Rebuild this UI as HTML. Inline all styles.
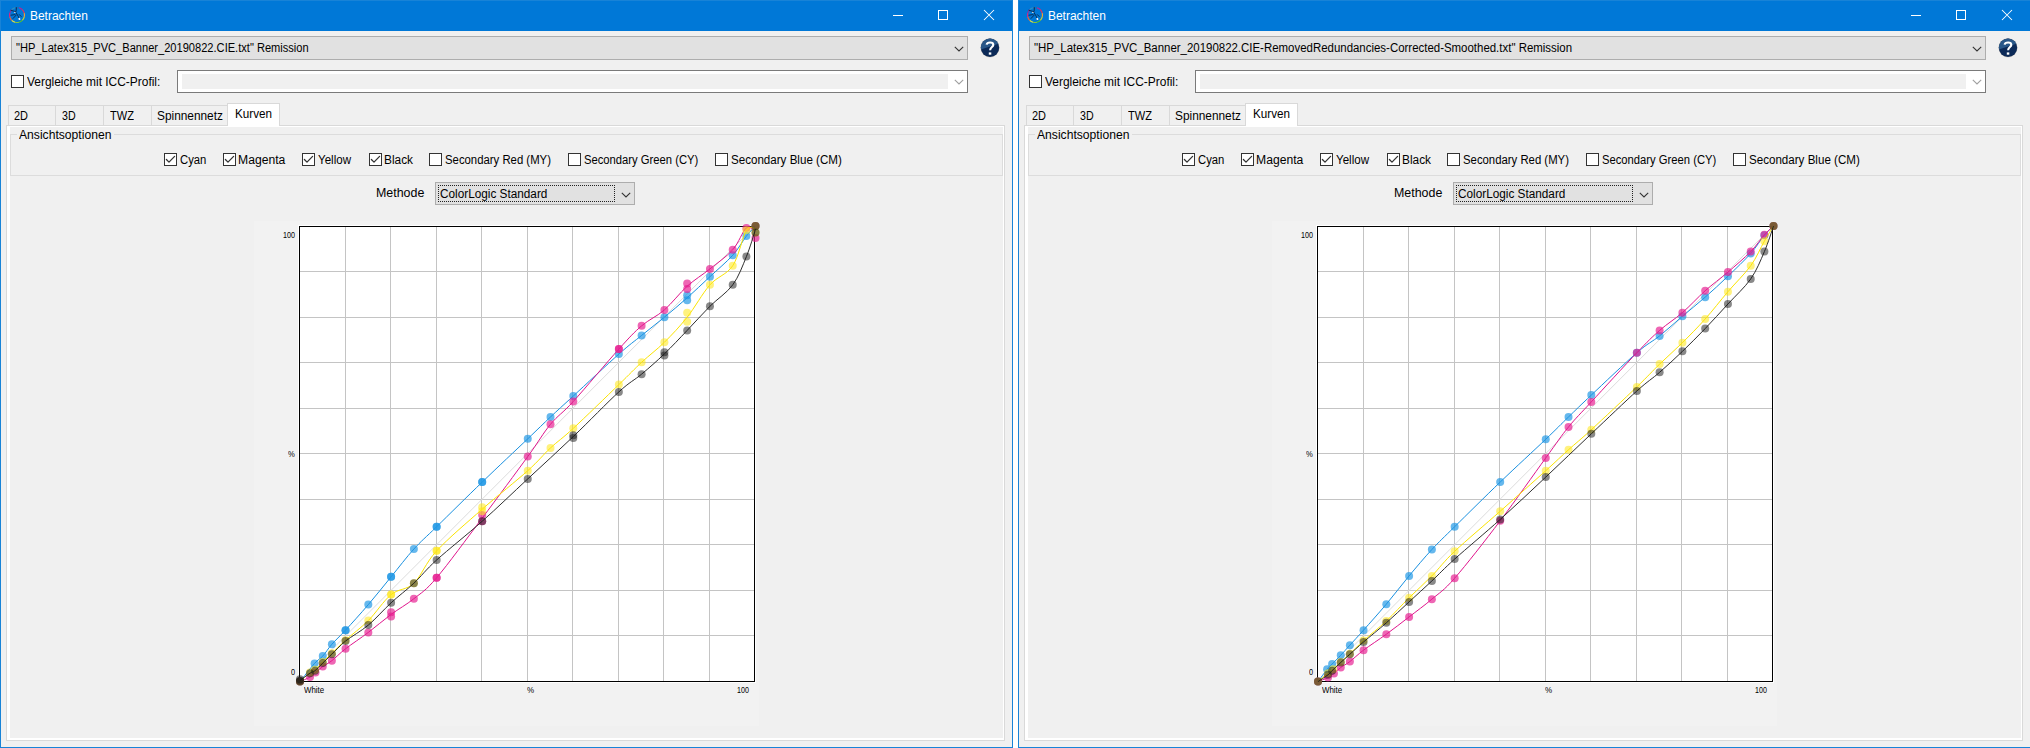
<!DOCTYPE html>
<html><head><meta charset="utf-8"><title>Betrachten</title>
<style>
html,body{margin:0;padding:0}
body{width:2030px;height:748px;overflow:hidden;background:#fff;position:relative;font-family:"Liberation Sans", sans-serif}
.win{position:absolute;top:0;width:1013px;height:748px;background:#f0f0f0;overflow:hidden}
.t{position:absolute;white-space:nowrap;transform-origin:0 0}
.cb{position:absolute;width:11px;height:11px;border:1px solid #333;background:#fff}
</style></head><body>
<div class="win" style="left:0px">
<div style="position:absolute;left:0;top:0;width:1013px;height:31px;background:#0078d7"></div>
<div style="position:absolute;left:0;top:0;width:1013px;height:1px;background:#1883d7"></div>
<div style="position:absolute;left:0;top:0;width:1px;height:748px;background:#1883d7"></div>
<div style="position:absolute;left:1012px;top:0;width:1px;height:748px;background:#1883d7"></div>
<div style="position:absolute;left:0;top:747px;width:1013px;height:1px;background:#1883d7"></div>
<svg width="20" height="20" style="position:absolute;left:7px;top:5px" viewBox="0 0 20 20"><path d="M17.24 8.06A7.5 7.5 0 0 1 17.24 11.94" stroke="#f0a030" stroke-width="1.2" fill="none"/><path d="M17.24 11.94A7.5 7.5 0 0 1 15.30 15.30" stroke="#c8d030" stroke-width="1.2" fill="none"/><path d="M15.30 15.30A7.5 7.5 0 0 1 11.94 17.24" stroke="#50c030" stroke-width="1.2" fill="none"/><path d="M11.94 17.24A7.5 7.5 0 0 1 8.06 17.24" stroke="#80c840" stroke-width="1.2" fill="none"/><path d="M8.06 17.24A7.5 7.5 0 0 1 4.70 15.30" stroke="#e8e040" stroke-width="1.2" fill="none"/><path d="M4.70 15.30A7.5 7.5 0 0 1 2.76 11.94" stroke="#f06030" stroke-width="1.2" fill="none"/><path d="M2.76 11.94A7.5 7.5 0 0 1 2.76 8.06" stroke="#e02080" stroke-width="1.2" fill="none"/><path d="M2.76 8.06A7.5 7.5 0 0 1 4.70 4.70" stroke="#9030a0" stroke-width="1.2" fill="none"/><path d="M4.70 4.70A7.5 7.5 0 0 1 8.06 2.76" stroke="#3090c0" stroke-width="1.2" fill="none"/><path d="M8.06 2.76A7.5 7.5 0 0 1 11.94 2.76" stroke="#2070b0" stroke-width="1.2" fill="none"/><path d="M11.94 2.76A7.5 7.5 0 0 1 15.30 4.70" stroke="#c02090" stroke-width="1.2" fill="none"/><path d="M15.30 4.70A7.5 7.5 0 0 1 17.24 8.06" stroke="#e03060" stroke-width="1.2" fill="none"/><path d="M9.4 2.7L9.1 6.1M4 5.3L8.8 6.7M8.6 7L11.2 11.2L12 13.4M4 10.2L8 9.6M6.1 13.4L9.1 10.2M12.3 9.6L14.2 11.5" stroke="#0c2040" stroke-width="0.85" fill="none" stroke-linecap="round"/><ellipse cx="7.8" cy="7.4" rx="0.9" ry="0.6" fill="#c0d0e0"/><ellipse cx="12.4" cy="13.9" rx="1.1" ry="0.9" fill="#fff" transform="rotate(35 12.4 13.9)"/></svg>
<div class="t" style="left:30.10px;top:9.84px;font-size:12px;line-height:12px;color:#fff;transform:scaleX(0.9964)">Betrachten</div>
<div style="position:absolute;left:893px;top:15px;width:10px;height:1px;background:#fff"></div>
<div style="position:absolute;left:938px;top:10px;width:8px;height:8px;border:1px solid #fff"></div>
<svg width="12" height="12" style="position:absolute;left:983px;top:9px"><path d="M1 1L11 11M11 1L1 11" stroke="#fff" stroke-width="1.05" fill="none"/></svg>
<div style="position:absolute;left:11px;top:36px;width:955px;height:22px;background:#e1e1e1;border:1px solid #adadad"></div>
<div class="t" style="left:15.50px;top:41.84px;font-size:12px;line-height:12px;color:#000;transform:scaleX(0.9241)">"HP_Latex315_PVC_Banner_20190822.CIE.txt" Remission</div>
<svg width="14" height="10" style="position:absolute;left:952.0px;top:44.0px"><path d="M2.8 2.8L7 7L11.2 2.8" stroke="#333" stroke-width="1.1" fill="none"/></svg>
<svg width="24" height="24" style="position:absolute;left:978px;top:36px" viewBox="0 0 24 24">
<defs><clipPath id="hc0"><circle cx="12" cy="11.75" r="9.2"/></clipPath></defs>
<circle cx="12" cy="11.75" r="9.5" fill="#7a6a5a" fill-opacity="0.45"/>
<circle cx="12" cy="11.75" r="9.2" fill="#0c2a58"/>
<path d="M0 14.5L24 6.5V0H0Z" fill="#2f5f90" fill-opacity="0.85" clip-path="url(#hc0)"/>
<path d="M8.6 8.6C9.1 5.9 15.3 5.6 15.3 8.9C15.3 10.9 12.1 11.4 12.1 14.3" stroke="#fff" stroke-width="2.1" fill="none"/>
<rect x="10.8" y="16.4" width="2.5" height="2.3" fill="#fff"/>
</svg>
<div class="cb" style="left:11px;top:75px"></div>
<div class="t" style="left:27.30px;top:75.84px;font-size:12px;line-height:12px;color:#000;transform:scaleX(0.9947)">Vergleiche mit ICC-Profil:</div>
<div style="position:absolute;left:177px;top:70px;width:789px;height:21px;background:#fff;border:1px solid #7a7a7a"></div>
<div style="position:absolute;left:182px;top:74px;width:766px;height:15px;background:#f0f0f0"></div>
<svg width="14" height="10" style="position:absolute;left:952.0px;top:77.0px"><path d="M2.8 2.8L7 7L11.2 2.8" stroke="#a0a0a0" stroke-width="1.1" fill="none"/></svg>
<div style="position:absolute;left:6px;top:125px;width:997px;height:614px;border:1px solid #d9d9d9;background:#fff"></div>
<div style="position:absolute;left:10px;top:127px;width:993px;height:611px;background:#f0f0f0"></div>
<div style="position:absolute;left:8px;top:105px;width:46px;height:19px;border:1px solid #d9d9d9;border-bottom:none;background:#f0f0f0"></div>
<div style="position:absolute;left:55px;top:105px;width:47px;height:19px;border:1px solid #d9d9d9;border-bottom:none;background:#f0f0f0"></div>
<div style="position:absolute;left:103px;top:105px;width:47px;height:19px;border:1px solid #d9d9d9;border-bottom:none;background:#f0f0f0"></div>
<div style="position:absolute;left:151px;top:105px;width:75px;height:19px;border:1px solid #d9d9d9;border-bottom:none;background:#f0f0f0"></div>
<div style="position:absolute;left:227px;top:103px;width:51px;height:22px;border:1px solid #d9d9d9;border-bottom:none;background:#fff"></div>
<div class="t" style="left:14.30px;top:109.84px;font-size:12px;line-height:12px;color:#000;transform:scaleX(0.9133)">2D</div>
<div class="t" style="left:62.30px;top:109.84px;font-size:12px;line-height:12px;color:#000;transform:scaleX(0.8867)">3D</div>
<div class="t" style="left:110.00px;top:109.84px;font-size:12px;line-height:12px;color:#000;transform:scaleX(0.9231)">TWZ</div>
<div class="t" style="left:157.30px;top:109.84px;font-size:12px;line-height:12px;color:#000;transform:scaleX(0.9879)">Spinnennetz</div>
<div class="t" style="left:234.60px;top:107.84px;font-size:12px;line-height:12px;color:#000;transform:scaleX(0.9730)">Kurven</div>
<div style="position:absolute;left:10px;top:134px;width:991px;height:40px;border:1px solid #dcdcdc"></div>
<div style="position:absolute;left:17px;top:130px;width:97px;height:8px;background:#f0f0f0"></div>
<div class="t" style="left:19.30px;top:128.84px;font-size:12px;line-height:12px;color:#000;transform:scaleX(1.0110)">Ansichtsoptionen</div>
<div class="cb" style="left:164px;top:153px"><svg width="13" height="13" style="position:absolute;left:-1px;top:-1px"><path d="M2.4 6.5L5 9.1L10.6 3.4" stroke="#333" stroke-width="1.3" fill="none" stroke-linecap="round" stroke-linejoin="round"/></svg></div>
<div class="t" style="left:180.40px;top:153.84px;font-size:12px;line-height:12px;color:#000;transform:scaleX(0.9393)">Cyan</div>
<div class="cb" style="left:223px;top:153px"><svg width="13" height="13" style="position:absolute;left:-1px;top:-1px"><path d="M2.4 6.5L5 9.1L10.6 3.4" stroke="#333" stroke-width="1.3" fill="none" stroke-linecap="round" stroke-linejoin="round"/></svg></div>
<div class="t" style="left:238.20px;top:153.84px;font-size:12px;line-height:12px;color:#000;transform:scaleX(1.0130)">Magenta</div>
<div class="cb" style="left:302px;top:153px"><svg width="13" height="13" style="position:absolute;left:-1px;top:-1px"><path d="M2.4 6.5L5 9.1L10.6 3.4" stroke="#333" stroke-width="1.3" fill="none" stroke-linecap="round" stroke-linejoin="round"/></svg></div>
<div class="t" style="left:318.30px;top:153.84px;font-size:12px;line-height:12px;color:#000;transform:scaleX(0.9629)">Yellow</div>
<div class="cb" style="left:369px;top:153px"><svg width="13" height="13" style="position:absolute;left:-1px;top:-1px"><path d="M2.4 6.5L5 9.1L10.6 3.4" stroke="#333" stroke-width="1.3" fill="none" stroke-linecap="round" stroke-linejoin="round"/></svg></div>
<div class="t" style="left:384.20px;top:153.84px;font-size:12px;line-height:12px;color:#000;transform:scaleX(0.9893)">Black</div>
<div class="cb" style="left:429px;top:153px"></div>
<div class="t" style="left:445.40px;top:153.84px;font-size:12px;line-height:12px;color:#000;transform:scaleX(0.9455)">Secondary Red (MY)</div>
<div class="cb" style="left:568px;top:153px"></div>
<div class="t" style="left:584.20px;top:153.84px;font-size:12px;line-height:12px;color:#000;transform:scaleX(0.9361)">Secondary Green (CY)</div>
<div class="cb" style="left:715px;top:153px"></div>
<div class="t" style="left:731.30px;top:153.84px;font-size:12px;line-height:12px;color:#000;transform:scaleX(0.9658)">Secondary Blue (CM)</div>
<div class="t" style="left:376.40px;top:186.84px;font-size:12px;line-height:12px;color:#000;transform:scaleX(1.0348)">Methode</div>
<div style="position:absolute;left:435px;top:182px;width:198px;height:21px;background:#e1e1e1;border:1px solid #adadad"></div>
<div style="position:absolute;left:438px;top:185px;width:175px;height:15px;border:1px dotted #222"></div>
<div class="t" style="left:439.50px;top:187.84px;font-size:12px;line-height:12px;color:#000;transform:scaleX(0.9817)">ColorLogic Standard</div>
<svg width="14" height="10" style="position:absolute;left:618.5px;top:189.5px"><path d="M2.8 2.8L7 7L11.2 2.8" stroke="#333" stroke-width="1.1" fill="none"/></svg>
<svg class="chart" width="1013" height="748" viewBox="0 0 1013 748" style="position:absolute;left:0;top:0">
<rect x="254" y="221" width="505" height="505" fill="#f2f2f2"/>
<rect x="298" y="225" width="458" height="458" fill="#fff"/>
<path d="M345.5 226.5V681.5 M299.5 271.5H754.5 M390.5 226.5V681.5 M299.5 317.5H754.5 M436.5 226.5V681.5 M299.5 362.5H754.5 M481.5 226.5V681.5 M299.5 408.5H754.5 M527.5 226.5V681.5 M299.5 453.5H754.5 M572.5 226.5V681.5 M299.5 499.5H754.5 M618.5 226.5V681.5 M299.5 544.5H754.5 M663.5 226.5V681.5 M299.5 590.5H754.5 M709.5 226.5V681.5 M299.5 635.5H754.5" stroke="#c4c4c4" stroke-width="1" fill="none" shape-rendering="crispEdges"/>
<path d="M300 681.5L754.5 226.5" stroke="#dcdcdc" stroke-width="1" fill="none"/>
<rect x="299.5" y="226.5" width="455" height="455" fill="none" stroke="#000" stroke-width="1" shape-rendering="crispEdges"/>
<path d="M300.00 681.60 C302.43 678.56 310.78 667.63 314.58 663.38 C318.37 659.13 319.89 659.28 322.77 656.09 C325.66 652.90 328.09 648.58 331.88 644.25 C335.68 639.92 339.48 636.73 345.55 630.13 C351.62 623.52 360.73 613.50 368.32 604.62 C375.92 595.74 383.51 586.10 391.10 576.84 C398.69 567.57 406.28 557.40 413.88 549.05 C421.47 540.70 425.26 537.89 436.65 526.73 C448.04 515.57 467.02 496.74 482.20 482.09 C497.38 467.44 516.36 449.67 527.75 438.82 C539.14 427.96 542.93 424.09 550.52 416.95 C558.12 409.82 561.91 406.48 573.30 396.00 C584.69 385.53 607.46 364.19 618.85 354.10 C630.24 344.00 634.03 341.57 641.62 335.42 C649.22 329.27 656.81 323.46 664.40 317.20 C671.99 310.94 679.58 304.60 687.17 297.84 C694.77 291.08 702.36 283.76 709.95 276.66 C717.54 269.56 726.65 262.01 732.72 255.25 C738.80 248.50 742.59 240.98 746.39 236.12 C750.19 231.26 753.98 227.77 755.50 226.10" stroke="#1890e0" stroke-width="1.0" fill="none"/>
<circle cx="300.00" cy="681.60" r="4" fill="rgba(30,150,228,0.68)"/>
<circle cx="314.58" cy="663.38" r="4" fill="rgba(30,150,228,0.68)"/>
<circle cx="322.77" cy="656.09" r="4" fill="rgba(30,150,228,0.68)"/>
<circle cx="331.88" cy="644.25" r="4" fill="rgba(30,150,228,0.68)"/>
<circle cx="345.55" cy="630.13" r="4" fill="rgba(30,150,228,0.68)"/>
<circle cx="345.55" cy="630.13" r="4" fill="rgba(30,150,228,0.68)"/>
<circle cx="368.32" cy="604.62" r="4" fill="rgba(30,150,228,0.68)"/>
<circle cx="391.10" cy="576.84" r="4" fill="rgba(30,150,228,0.68)"/>
<circle cx="391.10" cy="576.84" r="4" fill="rgba(30,150,228,0.68)"/>
<circle cx="413.88" cy="549.05" r="4" fill="rgba(30,150,228,0.68)"/>
<circle cx="436.65" cy="526.73" r="4" fill="rgba(30,150,228,0.68)"/>
<circle cx="436.65" cy="526.73" r="4" fill="rgba(30,150,228,0.68)"/>
<circle cx="482.20" cy="482.09" r="4" fill="rgba(30,150,228,0.68)"/>
<circle cx="482.20" cy="482.09" r="4" fill="rgba(30,150,228,0.68)"/>
<circle cx="527.75" cy="438.82" r="4" fill="rgba(30,150,228,0.68)"/>
<circle cx="550.52" cy="416.95" r="4" fill="rgba(30,150,228,0.68)"/>
<circle cx="573.30" cy="396.00" r="4" fill="rgba(30,150,228,0.68)"/>
<circle cx="618.85" cy="354.10" r="4" fill="rgba(30,150,228,0.68)"/>
<circle cx="641.62" cy="335.42" r="4" fill="rgba(30,150,228,0.68)"/>
<circle cx="664.40" cy="317.20" r="4" fill="rgba(30,150,228,0.68)"/>
<circle cx="687.17" cy="295.34" r="4" fill="rgba(30,150,228,0.68)"/>
<circle cx="687.17" cy="300.35" r="4" fill="rgba(30,150,228,0.68)"/>
<circle cx="709.95" cy="276.66" r="4" fill="rgba(30,150,228,0.68)"/>
<circle cx="732.72" cy="255.25" r="4" fill="rgba(30,150,228,0.68)"/>
<circle cx="746.39" cy="236.12" r="4" fill="rgba(30,150,228,0.68)"/>
<circle cx="755.50" cy="226.10" r="4" fill="rgba(30,150,228,0.68)"/>
<path d="M300.00 681.60 C301.67 680.84 307.44 678.56 310.02 677.05 C312.60 675.53 313.36 674.24 315.49 672.49 C317.61 670.74 320.04 668.54 322.77 666.57 C325.51 664.59 328.09 663.61 331.88 660.65 C335.68 657.69 339.48 653.51 345.55 648.80 C351.62 644.10 360.73 638.14 368.32 632.41 C375.92 626.67 383.51 620.03 391.10 614.41 C398.69 608.80 406.28 604.81 413.88 598.70 C421.47 592.59 425.26 591.18 436.65 577.75 C448.04 564.31 467.02 538.27 482.20 518.08 C497.38 497.88 516.36 472.22 527.75 456.58 C539.14 440.94 542.93 433.43 550.52 424.24 C558.12 415.06 561.91 413.99 573.30 401.47 C584.69 388.94 607.46 361.69 618.85 349.09 C630.24 336.48 634.03 332.38 641.62 325.85 C649.22 319.33 656.81 316.52 664.40 309.91 C671.99 303.31 679.58 293.06 687.17 286.23 C694.77 279.39 702.36 274.99 709.95 268.92 C717.54 262.84 726.65 256.62 732.72 249.79 C738.80 242.95 742.59 230.88 746.39 227.92 C750.19 224.96 753.98 231.34 755.50 232.02" stroke="#e0148c" stroke-width="1.0" fill="none"/>
<circle cx="300.00" cy="681.60" r="4" fill="rgba(230,30,145,0.68)"/>
<circle cx="310.02" cy="677.05" r="4" fill="rgba(230,30,145,0.68)"/>
<circle cx="315.49" cy="672.49" r="4" fill="rgba(230,30,145,0.68)"/>
<circle cx="322.77" cy="666.57" r="4" fill="rgba(230,30,145,0.68)"/>
<circle cx="331.88" cy="660.65" r="4" fill="rgba(230,30,145,0.68)"/>
<circle cx="345.55" cy="648.80" r="4" fill="rgba(230,30,145,0.68)"/>
<circle cx="368.32" cy="632.41" r="4" fill="rgba(230,30,145,0.68)"/>
<circle cx="391.10" cy="612.36" r="4" fill="rgba(230,30,145,0.68)"/>
<circle cx="391.10" cy="616.46" r="4" fill="rgba(230,30,145,0.68)"/>
<circle cx="413.88" cy="598.70" r="4" fill="rgba(230,30,145,0.68)"/>
<circle cx="436.65" cy="577.75" r="4" fill="rgba(230,30,145,0.68)"/>
<circle cx="436.65" cy="577.75" r="4" fill="rgba(230,30,145,0.68)"/>
<circle cx="482.20" cy="521.26" r="4" fill="rgba(230,30,145,0.68)"/>
<circle cx="482.20" cy="514.89" r="4" fill="rgba(230,30,145,0.68)"/>
<circle cx="527.75" cy="456.58" r="4" fill="rgba(230,30,145,0.68)"/>
<circle cx="550.52" cy="424.24" r="4" fill="rgba(230,30,145,0.68)"/>
<circle cx="573.30" cy="401.47" r="4" fill="rgba(230,30,145,0.68)"/>
<circle cx="618.85" cy="349.09" r="4" fill="rgba(230,30,145,0.68)"/>
<circle cx="618.85" cy="349.09" r="4" fill="rgba(230,30,145,0.68)"/>
<circle cx="641.62" cy="325.85" r="4" fill="rgba(230,30,145,0.68)"/>
<circle cx="664.40" cy="309.91" r="4" fill="rgba(230,30,145,0.68)"/>
<circle cx="687.17" cy="283.49" r="4" fill="rgba(230,30,145,0.68)"/>
<circle cx="687.17" cy="288.96" r="4" fill="rgba(230,30,145,0.68)"/>
<circle cx="709.95" cy="268.92" r="4" fill="rgba(230,30,145,0.68)"/>
<circle cx="732.72" cy="249.79" r="4" fill="rgba(230,30,145,0.68)"/>
<circle cx="746.39" cy="227.92" r="4" fill="rgba(230,30,145,0.68)"/>
<circle cx="755.50" cy="237.94" r="4" fill="rgba(230,30,145,0.68)"/>
<circle cx="755.50" cy="226.10" r="4" fill="rgba(230,30,145,0.68)"/>
<path d="M300.00 681.60 C301.67 680.08 307.52 674.46 310.02 672.49 C312.53 670.52 312.91 671.50 315.03 669.76 C317.16 668.01 319.97 664.75 322.77 662.01 C325.58 659.28 328.09 657.00 331.88 653.36 C335.68 649.72 339.48 645.62 345.55 640.15 C351.62 634.68 360.73 628.15 368.32 620.56 C375.92 612.97 383.51 600.82 391.10 594.60 C398.69 588.37 406.28 590.50 413.88 583.21 C421.47 575.92 425.26 563.21 436.65 550.87 C448.04 538.54 467.02 522.55 482.20 509.19 C497.38 495.83 516.36 480.91 527.75 470.70 C539.14 460.49 542.93 454.99 550.52 447.93 C558.12 440.87 561.91 438.89 573.30 428.34 C584.69 417.79 607.46 395.62 618.85 384.61 C630.24 373.61 634.03 369.35 641.62 362.29 C649.22 355.23 656.81 349.77 664.40 342.25 C671.99 334.74 679.58 326.77 687.17 317.20 C694.77 307.63 702.36 293.44 709.95 284.86 C717.54 276.28 726.65 274.84 732.72 265.73 C738.80 256.62 742.59 236.27 746.39 230.20 C750.19 224.13 753.98 229.44 755.50 229.29" stroke="#fbe400" stroke-width="1.0" fill="none"/>
<circle cx="300.00" cy="681.60" r="4" fill="rgba(255,232,20,0.55)"/>
<circle cx="310.02" cy="672.49" r="4" fill="rgba(255,232,20,0.55)"/>
<circle cx="315.03" cy="669.76" r="4" fill="rgba(255,232,20,0.55)"/>
<circle cx="322.77" cy="662.01" r="4" fill="rgba(255,232,20,0.55)"/>
<circle cx="331.88" cy="653.36" r="4" fill="rgba(255,232,20,0.55)"/>
<circle cx="345.55" cy="640.15" r="4" fill="rgba(255,232,20,0.55)"/>
<circle cx="368.32" cy="620.56" r="4" fill="rgba(255,232,20,0.55)"/>
<circle cx="391.10" cy="594.60" r="4" fill="rgba(255,232,20,0.55)"/>
<circle cx="391.10" cy="594.60" r="4" fill="rgba(255,232,20,0.55)"/>
<circle cx="413.88" cy="583.21" r="4" fill="rgba(255,232,20,0.55)"/>
<circle cx="436.65" cy="550.87" r="4" fill="rgba(255,232,20,0.55)"/>
<circle cx="436.65" cy="550.87" r="4" fill="rgba(255,232,20,0.55)"/>
<circle cx="482.20" cy="507.14" r="4" fill="rgba(255,232,20,0.55)"/>
<circle cx="482.20" cy="511.24" r="4" fill="rgba(255,232,20,0.55)"/>
<circle cx="527.75" cy="470.70" r="4" fill="rgba(255,232,20,0.55)"/>
<circle cx="550.52" cy="447.93" r="4" fill="rgba(255,232,20,0.55)"/>
<circle cx="573.30" cy="428.34" r="4" fill="rgba(255,232,20,0.55)"/>
<circle cx="618.85" cy="384.61" r="4" fill="rgba(255,232,20,0.55)"/>
<circle cx="641.62" cy="362.29" r="4" fill="rgba(255,232,20,0.55)"/>
<circle cx="664.40" cy="342.25" r="4" fill="rgba(255,232,20,0.55)"/>
<circle cx="687.17" cy="312.65" r="4" fill="rgba(255,232,20,0.55)"/>
<circle cx="687.17" cy="321.76" r="4" fill="rgba(255,232,20,0.55)"/>
<circle cx="709.95" cy="284.86" r="4" fill="rgba(255,232,20,0.55)"/>
<circle cx="732.72" cy="265.73" r="4" fill="rgba(255,232,20,0.55)"/>
<circle cx="746.39" cy="230.20" r="4" fill="rgba(255,232,20,0.55)"/>
<circle cx="755.50" cy="232.48" r="4" fill="rgba(255,232,20,0.55)"/>
<circle cx="755.50" cy="226.10" r="4" fill="rgba(255,232,20,0.55)"/>
<path d="M300.00 680.54 C301.67 679.31 307.52 674.82 310.02 673.17 C312.53 671.53 312.91 672.35 315.03 670.67 C317.16 668.99 319.97 665.84 322.77 663.11 C325.58 660.37 328.09 657.94 331.88 654.27 C335.68 650.60 339.48 645.92 345.55 641.06 C351.62 636.20 360.73 631.50 368.32 625.12 C375.92 618.74 383.51 609.78 391.10 602.80 C398.69 595.81 406.28 590.35 413.88 583.21 C421.47 576.08 425.26 570.31 436.65 559.98 C448.04 549.66 467.02 534.78 482.20 521.26 C497.38 507.75 512.57 493.02 527.75 478.90 C542.93 464.78 558.12 451.04 573.30 436.54 C588.48 422.04 607.46 402.30 618.85 391.90 C630.24 381.50 634.03 380.48 641.62 374.14 C649.22 367.80 656.81 361.16 664.40 353.87 C671.99 346.58 679.58 338.34 687.17 330.41 C694.77 322.48 702.36 313.86 709.95 306.27 C717.54 298.68 726.65 293.13 732.72 284.86 C738.80 276.58 742.59 265.88 746.39 256.62 C750.19 247.36 753.98 233.84 755.50 229.29" stroke="#303030" stroke-width="1.0" fill="none"/>
<circle cx="300.00" cy="679.32" r="4" fill="rgba(20,20,20,0.5)"/>
<circle cx="300.00" cy="680.69" r="4" fill="rgba(20,20,20,0.5)"/>
<circle cx="300.00" cy="681.60" r="4" fill="rgba(20,20,20,0.5)"/>
<circle cx="310.02" cy="673.17" r="4" fill="rgba(20,20,20,0.5)"/>
<circle cx="315.03" cy="670.67" r="4" fill="rgba(20,20,20,0.5)"/>
<circle cx="322.77" cy="663.11" r="4" fill="rgba(20,20,20,0.5)"/>
<circle cx="331.88" cy="654.27" r="4" fill="rgba(20,20,20,0.5)"/>
<circle cx="345.55" cy="641.06" r="4" fill="rgba(20,20,20,0.5)"/>
<circle cx="368.32" cy="625.12" r="4" fill="rgba(20,20,20,0.5)"/>
<circle cx="391.10" cy="602.80" r="4" fill="rgba(20,20,20,0.5)"/>
<circle cx="413.88" cy="583.21" r="4" fill="rgba(20,20,20,0.5)"/>
<circle cx="436.65" cy="559.98" r="4" fill="rgba(20,20,20,0.5)"/>
<circle cx="482.20" cy="521.26" r="4" fill="rgba(20,20,20,0.5)"/>
<circle cx="527.75" cy="478.90" r="4" fill="rgba(20,20,20,0.5)"/>
<circle cx="573.30" cy="435.17" r="4" fill="rgba(20,20,20,0.5)"/>
<circle cx="573.30" cy="437.91" r="4" fill="rgba(20,20,20,0.5)"/>
<circle cx="618.85" cy="391.90" r="4" fill="rgba(20,20,20,0.5)"/>
<circle cx="641.62" cy="374.14" r="4" fill="rgba(20,20,20,0.5)"/>
<circle cx="664.40" cy="352.27" r="4" fill="rgba(20,20,20,0.5)"/>
<circle cx="664.40" cy="355.46" r="4" fill="rgba(20,20,20,0.5)"/>
<circle cx="687.17" cy="330.41" r="4" fill="rgba(20,20,20,0.5)"/>
<circle cx="709.95" cy="306.27" r="4" fill="rgba(20,20,20,0.5)"/>
<circle cx="732.72" cy="284.86" r="4" fill="rgba(20,20,20,0.5)"/>
<circle cx="746.39" cy="256.62" r="4" fill="rgba(20,20,20,0.5)"/>
<circle cx="755.50" cy="232.48" r="4" fill="rgba(20,20,20,0.5)"/>
<circle cx="755.50" cy="226.10" r="4" fill="rgba(20,20,20,0.5)"/>
</svg>
<div class="t" style="left:282.50px;top:231.10px;font-size:8.5px;line-height:8.5px;color:#000;transform:scaleX(0.8450)">100</div>
<div class="t" style="left:288.00px;top:449.60px;font-size:8.5px;line-height:8.5px;color:#000;transform:scaleX(0.9000)">%</div>
<div class="t" style="left:291.20px;top:668.10px;font-size:8.5px;line-height:8.5px;color:#000;transform:scaleX(0.8600)">0</div>
<div class="t" style="left:304.30px;top:686.00px;font-size:8.5px;line-height:8.5px;color:#000;transform:scaleX(0.9300)">White</div>
<div class="t" style="left:527.30px;top:686.00px;font-size:8.5px;line-height:8.5px;color:#000;transform:scaleX(0.9400)">%</div>
<div class="t" style="left:737.00px;top:686.00px;font-size:8.5px;line-height:8.5px;color:#000;transform:scaleX(0.8360)">100</div>
</div><div class="win" style="left:1018px">
<div style="position:absolute;left:0;top:0;width:1013px;height:31px;background:#0078d7"></div>
<div style="position:absolute;left:0;top:0;width:1013px;height:1px;background:#1883d7"></div>
<div style="position:absolute;left:0;top:0;width:1px;height:748px;background:#1883d7"></div>
<div style="position:absolute;left:1012px;top:0;width:1px;height:748px;background:#1883d7"></div>
<div style="position:absolute;left:0;top:747px;width:1013px;height:1px;background:#1883d7"></div>
<svg width="20" height="20" style="position:absolute;left:7px;top:5px" viewBox="0 0 20 20"><path d="M17.24 8.06A7.5 7.5 0 0 1 17.24 11.94" stroke="#f0a030" stroke-width="1.2" fill="none"/><path d="M17.24 11.94A7.5 7.5 0 0 1 15.30 15.30" stroke="#c8d030" stroke-width="1.2" fill="none"/><path d="M15.30 15.30A7.5 7.5 0 0 1 11.94 17.24" stroke="#50c030" stroke-width="1.2" fill="none"/><path d="M11.94 17.24A7.5 7.5 0 0 1 8.06 17.24" stroke="#80c840" stroke-width="1.2" fill="none"/><path d="M8.06 17.24A7.5 7.5 0 0 1 4.70 15.30" stroke="#e8e040" stroke-width="1.2" fill="none"/><path d="M4.70 15.30A7.5 7.5 0 0 1 2.76 11.94" stroke="#f06030" stroke-width="1.2" fill="none"/><path d="M2.76 11.94A7.5 7.5 0 0 1 2.76 8.06" stroke="#e02080" stroke-width="1.2" fill="none"/><path d="M2.76 8.06A7.5 7.5 0 0 1 4.70 4.70" stroke="#9030a0" stroke-width="1.2" fill="none"/><path d="M4.70 4.70A7.5 7.5 0 0 1 8.06 2.76" stroke="#3090c0" stroke-width="1.2" fill="none"/><path d="M8.06 2.76A7.5 7.5 0 0 1 11.94 2.76" stroke="#2070b0" stroke-width="1.2" fill="none"/><path d="M11.94 2.76A7.5 7.5 0 0 1 15.30 4.70" stroke="#c02090" stroke-width="1.2" fill="none"/><path d="M15.30 4.70A7.5 7.5 0 0 1 17.24 8.06" stroke="#e03060" stroke-width="1.2" fill="none"/><path d="M9.4 2.7L9.1 6.1M4 5.3L8.8 6.7M8.6 7L11.2 11.2L12 13.4M4 10.2L8 9.6M6.1 13.4L9.1 10.2M12.3 9.6L14.2 11.5" stroke="#0c2040" stroke-width="0.85" fill="none" stroke-linecap="round"/><ellipse cx="7.8" cy="7.4" rx="0.9" ry="0.6" fill="#c0d0e0"/><ellipse cx="12.4" cy="13.9" rx="1.1" ry="0.9" fill="#fff" transform="rotate(35 12.4 13.9)"/></svg>
<div class="t" style="left:30.10px;top:9.84px;font-size:12px;line-height:12px;color:#fff;transform:scaleX(0.9964)">Betrachten</div>
<div style="position:absolute;left:893px;top:15px;width:10px;height:1px;background:#fff"></div>
<div style="position:absolute;left:938px;top:10px;width:8px;height:8px;border:1px solid #fff"></div>
<svg width="12" height="12" style="position:absolute;left:983px;top:9px"><path d="M1 1L11 11M11 1L1 11" stroke="#fff" stroke-width="1.05" fill="none"/></svg>
<div style="position:absolute;left:11px;top:36px;width:955px;height:22px;background:#e1e1e1;border:1px solid #adadad"></div>
<div class="t" style="left:15.50px;top:41.84px;font-size:12px;line-height:12px;color:#000;transform:scaleX(0.9537)">"HP_Latex315_PVC_Banner_20190822.CIE-RemovedRedundancies-Corrected-Smoothed.txt" Remission</div>
<svg width="14" height="10" style="position:absolute;left:952.0px;top:44.0px"><path d="M2.8 2.8L7 7L11.2 2.8" stroke="#333" stroke-width="1.1" fill="none"/></svg>
<svg width="24" height="24" style="position:absolute;left:978px;top:36px" viewBox="0 0 24 24">
<defs><clipPath id="hc1018"><circle cx="12" cy="11.75" r="9.2"/></clipPath></defs>
<circle cx="12" cy="11.75" r="9.5" fill="#7a6a5a" fill-opacity="0.45"/>
<circle cx="12" cy="11.75" r="9.2" fill="#0c2a58"/>
<path d="M0 14.5L24 6.5V0H0Z" fill="#2f5f90" fill-opacity="0.85" clip-path="url(#hc1018)"/>
<path d="M8.6 8.6C9.1 5.9 15.3 5.6 15.3 8.9C15.3 10.9 12.1 11.4 12.1 14.3" stroke="#fff" stroke-width="2.1" fill="none"/>
<rect x="10.8" y="16.4" width="2.5" height="2.3" fill="#fff"/>
</svg>
<div class="cb" style="left:11px;top:75px"></div>
<div class="t" style="left:27.30px;top:75.84px;font-size:12px;line-height:12px;color:#000;transform:scaleX(0.9947)">Vergleiche mit ICC-Profil:</div>
<div style="position:absolute;left:177px;top:70px;width:789px;height:21px;background:#fff;border:1px solid #7a7a7a"></div>
<div style="position:absolute;left:182px;top:74px;width:766px;height:15px;background:#f0f0f0"></div>
<svg width="14" height="10" style="position:absolute;left:952.0px;top:77.0px"><path d="M2.8 2.8L7 7L11.2 2.8" stroke="#a0a0a0" stroke-width="1.1" fill="none"/></svg>
<div style="position:absolute;left:6px;top:125px;width:997px;height:614px;border:1px solid #d9d9d9;background:#fff"></div>
<div style="position:absolute;left:10px;top:127px;width:993px;height:611px;background:#f0f0f0"></div>
<div style="position:absolute;left:8px;top:105px;width:46px;height:19px;border:1px solid #d9d9d9;border-bottom:none;background:#f0f0f0"></div>
<div style="position:absolute;left:55px;top:105px;width:47px;height:19px;border:1px solid #d9d9d9;border-bottom:none;background:#f0f0f0"></div>
<div style="position:absolute;left:103px;top:105px;width:47px;height:19px;border:1px solid #d9d9d9;border-bottom:none;background:#f0f0f0"></div>
<div style="position:absolute;left:151px;top:105px;width:75px;height:19px;border:1px solid #d9d9d9;border-bottom:none;background:#f0f0f0"></div>
<div style="position:absolute;left:227px;top:103px;width:51px;height:22px;border:1px solid #d9d9d9;border-bottom:none;background:#fff"></div>
<div class="t" style="left:14.30px;top:109.84px;font-size:12px;line-height:12px;color:#000;transform:scaleX(0.9133)">2D</div>
<div class="t" style="left:62.30px;top:109.84px;font-size:12px;line-height:12px;color:#000;transform:scaleX(0.8867)">3D</div>
<div class="t" style="left:110.00px;top:109.84px;font-size:12px;line-height:12px;color:#000;transform:scaleX(0.9231)">TWZ</div>
<div class="t" style="left:157.30px;top:109.84px;font-size:12px;line-height:12px;color:#000;transform:scaleX(0.9879)">Spinnennetz</div>
<div class="t" style="left:234.60px;top:107.84px;font-size:12px;line-height:12px;color:#000;transform:scaleX(0.9730)">Kurven</div>
<div style="position:absolute;left:10px;top:134px;width:991px;height:40px;border:1px solid #dcdcdc"></div>
<div style="position:absolute;left:17px;top:130px;width:97px;height:8px;background:#f0f0f0"></div>
<div class="t" style="left:19.30px;top:128.84px;font-size:12px;line-height:12px;color:#000;transform:scaleX(1.0110)">Ansichtsoptionen</div>
<div class="cb" style="left:164px;top:153px"><svg width="13" height="13" style="position:absolute;left:-1px;top:-1px"><path d="M2.4 6.5L5 9.1L10.6 3.4" stroke="#333" stroke-width="1.3" fill="none" stroke-linecap="round" stroke-linejoin="round"/></svg></div>
<div class="t" style="left:180.40px;top:153.84px;font-size:12px;line-height:12px;color:#000;transform:scaleX(0.9393)">Cyan</div>
<div class="cb" style="left:223px;top:153px"><svg width="13" height="13" style="position:absolute;left:-1px;top:-1px"><path d="M2.4 6.5L5 9.1L10.6 3.4" stroke="#333" stroke-width="1.3" fill="none" stroke-linecap="round" stroke-linejoin="round"/></svg></div>
<div class="t" style="left:238.20px;top:153.84px;font-size:12px;line-height:12px;color:#000;transform:scaleX(1.0130)">Magenta</div>
<div class="cb" style="left:302px;top:153px"><svg width="13" height="13" style="position:absolute;left:-1px;top:-1px"><path d="M2.4 6.5L5 9.1L10.6 3.4" stroke="#333" stroke-width="1.3" fill="none" stroke-linecap="round" stroke-linejoin="round"/></svg></div>
<div class="t" style="left:318.30px;top:153.84px;font-size:12px;line-height:12px;color:#000;transform:scaleX(0.9629)">Yellow</div>
<div class="cb" style="left:369px;top:153px"><svg width="13" height="13" style="position:absolute;left:-1px;top:-1px"><path d="M2.4 6.5L5 9.1L10.6 3.4" stroke="#333" stroke-width="1.3" fill="none" stroke-linecap="round" stroke-linejoin="round"/></svg></div>
<div class="t" style="left:384.20px;top:153.84px;font-size:12px;line-height:12px;color:#000;transform:scaleX(0.9893)">Black</div>
<div class="cb" style="left:429px;top:153px"></div>
<div class="t" style="left:445.40px;top:153.84px;font-size:12px;line-height:12px;color:#000;transform:scaleX(0.9455)">Secondary Red (MY)</div>
<div class="cb" style="left:568px;top:153px"></div>
<div class="t" style="left:584.20px;top:153.84px;font-size:12px;line-height:12px;color:#000;transform:scaleX(0.9361)">Secondary Green (CY)</div>
<div class="cb" style="left:715px;top:153px"></div>
<div class="t" style="left:731.30px;top:153.84px;font-size:12px;line-height:12px;color:#000;transform:scaleX(0.9658)">Secondary Blue (CM)</div>
<div class="t" style="left:376.40px;top:186.84px;font-size:12px;line-height:12px;color:#000;transform:scaleX(1.0348)">Methode</div>
<div style="position:absolute;left:435px;top:182px;width:198px;height:21px;background:#e1e1e1;border:1px solid #adadad"></div>
<div style="position:absolute;left:438px;top:185px;width:175px;height:15px;border:1px dotted #222"></div>
<div class="t" style="left:439.50px;top:187.84px;font-size:12px;line-height:12px;color:#000;transform:scaleX(0.9817)">ColorLogic Standard</div>
<svg width="14" height="10" style="position:absolute;left:618.5px;top:189.5px"><path d="M2.8 2.8L7 7L11.2 2.8" stroke="#333" stroke-width="1.1" fill="none"/></svg>
<svg class="chart" width="1013" height="748" viewBox="0 0 1013 748" style="position:absolute;left:0;top:0">
<rect x="254" y="221" width="505" height="505" fill="#f2f2f2"/>
<rect x="298" y="225" width="458" height="458" fill="#fff"/>
<path d="M345.5 226.5V681.5 M299.5 271.5H754.5 M390.5 226.5V681.5 M299.5 317.5H754.5 M436.5 226.5V681.5 M299.5 362.5H754.5 M481.5 226.5V681.5 M299.5 408.5H754.5 M527.5 226.5V681.5 M299.5 453.5H754.5 M572.5 226.5V681.5 M299.5 499.5H754.5 M618.5 226.5V681.5 M299.5 544.5H754.5 M663.5 226.5V681.5 M299.5 590.5H754.5 M709.5 226.5V681.5 M299.5 635.5H754.5" stroke="#c4c4c4" stroke-width="1" fill="none" shape-rendering="crispEdges"/>
<path d="M300 681.5L754.5 226.5" stroke="#dcdcdc" stroke-width="1" fill="none"/>
<rect x="299.5" y="226.5" width="455" height="455" fill="none" stroke="#000" stroke-width="1" shape-rendering="crispEdges"/>
<path d="M300.00 681.60 C301.52 679.55 306.76 672.22 309.11 669.30 C311.46 666.38 311.84 666.42 314.12 664.06 C316.40 661.71 319.81 658.33 322.77 655.18 C325.74 652.03 328.09 649.34 331.88 645.16 C335.68 640.98 339.48 636.96 345.55 630.13 C351.62 623.30 360.73 613.20 368.32 604.16 C375.92 595.13 383.51 585.03 391.10 575.92 C398.69 566.81 406.28 557.70 413.88 549.50 C421.47 541.31 425.26 537.97 436.65 526.73 C448.04 515.49 467.02 496.67 482.20 482.09 C497.38 467.51 516.36 450.13 527.75 439.27 C539.14 428.42 542.93 424.32 550.52 416.95 C558.12 409.59 561.91 405.79 573.30 395.09 C584.69 384.39 607.46 362.60 618.85 352.73 C630.24 342.86 634.03 341.95 641.62 335.88 C649.22 329.80 656.81 322.74 664.40 316.29 C671.99 309.84 679.58 303.84 687.17 297.16 C694.77 290.48 702.36 283.49 709.95 276.21 C717.54 268.92 726.65 260.26 732.72 253.43 C738.80 246.60 742.59 239.77 746.39 235.21 C750.19 230.66 753.98 227.62 755.50 226.10" stroke="#1890e0" stroke-width="1.0" fill="none"/>
<circle cx="300.00" cy="681.60" r="4" fill="rgba(30,150,228,0.68)"/>
<circle cx="309.11" cy="669.30" r="4" fill="rgba(30,150,228,0.68)"/>
<circle cx="314.12" cy="664.06" r="4" fill="rgba(30,150,228,0.68)"/>
<circle cx="322.77" cy="655.18" r="4" fill="rgba(30,150,228,0.68)"/>
<circle cx="331.88" cy="645.16" r="4" fill="rgba(30,150,228,0.68)"/>
<circle cx="345.55" cy="630.13" r="4" fill="rgba(30,150,228,0.68)"/>
<circle cx="368.32" cy="604.16" r="4" fill="rgba(30,150,228,0.68)"/>
<circle cx="391.10" cy="575.92" r="4" fill="rgba(30,150,228,0.68)"/>
<circle cx="413.88" cy="549.50" r="4" fill="rgba(30,150,228,0.68)"/>
<circle cx="436.65" cy="526.73" r="4" fill="rgba(30,150,228,0.68)"/>
<circle cx="482.20" cy="482.09" r="4" fill="rgba(30,150,228,0.68)"/>
<circle cx="527.75" cy="439.27" r="4" fill="rgba(30,150,228,0.68)"/>
<circle cx="550.52" cy="416.95" r="4" fill="rgba(30,150,228,0.68)"/>
<circle cx="573.30" cy="395.09" r="4" fill="rgba(30,150,228,0.68)"/>
<circle cx="618.85" cy="352.73" r="4" fill="rgba(30,150,228,0.68)"/>
<circle cx="641.62" cy="335.88" r="4" fill="rgba(30,150,228,0.68)"/>
<circle cx="664.40" cy="316.29" r="4" fill="rgba(30,150,228,0.68)"/>
<circle cx="687.17" cy="297.16" r="4" fill="rgba(30,150,228,0.68)"/>
<circle cx="709.95" cy="276.21" r="4" fill="rgba(30,150,228,0.68)"/>
<circle cx="732.72" cy="253.43" r="4" fill="rgba(30,150,228,0.68)"/>
<circle cx="746.39" cy="235.21" r="4" fill="rgba(30,150,228,0.68)"/>
<circle cx="755.50" cy="226.10" r="4" fill="rgba(30,150,228,0.68)"/>
<path d="M300.00 681.60 C301.67 680.92 307.36 678.87 310.02 677.50 C312.68 676.13 313.82 675.07 315.94 673.40 C318.07 671.73 320.12 669.45 322.77 667.48 C325.43 665.51 328.09 664.44 331.88 661.56 C335.68 658.67 339.48 654.73 345.55 650.17 C351.62 645.62 360.73 639.77 368.32 634.23 C375.92 628.69 383.51 622.76 391.10 616.92 C398.69 611.07 406.28 605.61 413.88 599.15 C421.47 592.70 425.26 591.26 436.65 578.20 C448.04 565.14 467.02 540.85 482.20 520.81 C497.38 500.77 516.36 473.59 527.75 457.95 C539.14 442.31 542.93 436.31 550.52 426.98 C558.12 417.64 561.91 414.30 573.30 401.92 C584.69 389.55 607.46 364.65 618.85 352.73 C630.24 340.81 634.03 337.09 641.62 330.41 C649.22 323.73 656.81 319.25 664.40 312.65 C671.99 306.04 679.58 297.54 687.17 290.78 C694.77 284.02 702.36 278.63 709.95 272.11 C717.54 265.58 726.65 257.83 732.72 251.61 C738.80 245.38 742.59 239.01 746.39 234.75 C750.19 230.50 753.98 227.54 755.50 226.10" stroke="#e0148c" stroke-width="1.0" fill="none"/>
<circle cx="300.00" cy="681.60" r="4" fill="rgba(230,30,145,0.68)"/>
<circle cx="310.02" cy="677.50" r="4" fill="rgba(230,30,145,0.68)"/>
<circle cx="315.94" cy="673.40" r="4" fill="rgba(230,30,145,0.68)"/>
<circle cx="322.77" cy="667.48" r="4" fill="rgba(230,30,145,0.68)"/>
<circle cx="331.88" cy="661.56" r="4" fill="rgba(230,30,145,0.68)"/>
<circle cx="345.55" cy="650.17" r="4" fill="rgba(230,30,145,0.68)"/>
<circle cx="368.32" cy="634.23" r="4" fill="rgba(230,30,145,0.68)"/>
<circle cx="391.10" cy="616.92" r="4" fill="rgba(230,30,145,0.68)"/>
<circle cx="413.88" cy="599.15" r="4" fill="rgba(230,30,145,0.68)"/>
<circle cx="436.65" cy="578.20" r="4" fill="rgba(230,30,145,0.68)"/>
<circle cx="482.20" cy="520.81" r="4" fill="rgba(230,30,145,0.68)"/>
<circle cx="527.75" cy="457.95" r="4" fill="rgba(230,30,145,0.68)"/>
<circle cx="550.52" cy="426.98" r="4" fill="rgba(230,30,145,0.68)"/>
<circle cx="573.30" cy="401.92" r="4" fill="rgba(230,30,145,0.68)"/>
<circle cx="618.85" cy="352.73" r="4" fill="rgba(230,30,145,0.68)"/>
<circle cx="641.62" cy="330.41" r="4" fill="rgba(230,30,145,0.68)"/>
<circle cx="664.40" cy="312.65" r="4" fill="rgba(230,30,145,0.68)"/>
<circle cx="687.17" cy="290.78" r="4" fill="rgba(230,30,145,0.68)"/>
<circle cx="709.95" cy="272.11" r="4" fill="rgba(230,30,145,0.68)"/>
<circle cx="732.72" cy="251.61" r="4" fill="rgba(230,30,145,0.68)"/>
<circle cx="746.39" cy="234.75" r="4" fill="rgba(230,30,145,0.68)"/>
<circle cx="755.50" cy="226.10" r="4" fill="rgba(230,30,145,0.68)"/>
<path d="M300.00 681.60 C301.67 680.20 307.52 675.22 310.02 673.17 C312.53 671.12 312.91 671.16 315.03 669.30 C317.16 667.44 319.97 664.59 322.77 662.01 C325.58 659.43 328.09 657.38 331.88 653.81 C335.68 650.25 339.48 646.07 345.55 640.61 C351.62 635.14 360.73 628.15 368.32 621.02 C375.92 613.88 383.51 605.30 391.10 597.79 C398.69 590.27 406.28 583.67 413.88 575.92 C421.47 568.18 425.26 562.11 436.65 551.33 C448.04 540.55 467.02 524.68 482.20 511.24 C497.38 497.81 516.36 480.95 527.75 470.70 C539.14 460.45 542.93 456.58 550.52 449.75 C558.12 442.92 561.91 440.19 573.30 429.71 C584.69 419.23 607.46 397.82 618.85 386.89 C630.24 375.96 634.03 371.48 641.62 364.12 C649.22 356.75 656.81 350.22 664.40 342.71 C671.99 335.19 679.58 327.52 687.17 319.02 C694.77 310.52 702.36 300.57 709.95 291.69 C717.54 282.81 726.65 274.16 732.72 265.73 C738.80 257.30 742.59 247.74 746.39 241.13 C750.19 234.53 753.98 228.61 755.50 226.10" stroke="#fbe400" stroke-width="1.0" fill="none"/>
<circle cx="300.00" cy="681.60" r="4" fill="rgba(255,232,20,0.55)"/>
<circle cx="310.02" cy="673.17" r="4" fill="rgba(255,232,20,0.55)"/>
<circle cx="315.03" cy="669.30" r="4" fill="rgba(255,232,20,0.55)"/>
<circle cx="322.77" cy="662.01" r="4" fill="rgba(255,232,20,0.55)"/>
<circle cx="331.88" cy="653.81" r="4" fill="rgba(255,232,20,0.55)"/>
<circle cx="345.55" cy="640.61" r="4" fill="rgba(255,232,20,0.55)"/>
<circle cx="368.32" cy="621.02" r="4" fill="rgba(255,232,20,0.55)"/>
<circle cx="391.10" cy="597.79" r="4" fill="rgba(255,232,20,0.55)"/>
<circle cx="413.88" cy="575.92" r="4" fill="rgba(255,232,20,0.55)"/>
<circle cx="436.65" cy="551.33" r="4" fill="rgba(255,232,20,0.55)"/>
<circle cx="482.20" cy="511.24" r="4" fill="rgba(255,232,20,0.55)"/>
<circle cx="527.75" cy="470.70" r="4" fill="rgba(255,232,20,0.55)"/>
<circle cx="550.52" cy="449.75" r="4" fill="rgba(255,232,20,0.55)"/>
<circle cx="573.30" cy="429.71" r="4" fill="rgba(255,232,20,0.55)"/>
<circle cx="618.85" cy="386.89" r="4" fill="rgba(255,232,20,0.55)"/>
<circle cx="641.62" cy="364.12" r="4" fill="rgba(255,232,20,0.55)"/>
<circle cx="664.40" cy="342.71" r="4" fill="rgba(255,232,20,0.55)"/>
<circle cx="687.17" cy="319.02" r="4" fill="rgba(255,232,20,0.55)"/>
<circle cx="709.95" cy="291.69" r="4" fill="rgba(255,232,20,0.55)"/>
<circle cx="732.72" cy="265.73" r="4" fill="rgba(255,232,20,0.55)"/>
<circle cx="746.39" cy="241.13" r="4" fill="rgba(255,232,20,0.55)"/>
<circle cx="755.50" cy="226.10" r="4" fill="rgba(255,232,20,0.55)"/>
<path d="M300.00 681.60 C301.67 680.46 307.67 676.59 310.02 674.77 C312.37 672.95 311.99 672.72 314.12 670.67 C316.25 668.62 319.81 665.20 322.77 662.47 C325.74 659.74 328.09 657.69 331.88 654.27 C335.68 650.85 339.48 647.21 345.55 641.97 C351.62 636.73 360.73 629.52 368.32 622.84 C375.92 616.16 383.51 608.87 391.10 601.89 C398.69 594.90 406.28 588.07 413.88 580.93 C421.47 573.80 425.26 569.32 436.65 559.07 C448.04 548.82 467.02 533.11 482.20 519.44 C497.38 505.78 512.57 491.35 527.75 477.08 C542.93 462.81 558.12 448.16 573.30 433.81 C588.48 419.46 607.46 401.24 618.85 390.99 C630.24 380.74 634.03 378.92 641.62 372.32 C649.22 365.71 656.81 358.65 664.40 351.36 C671.99 344.07 679.58 336.48 687.17 328.59 C694.77 320.69 702.36 312.27 709.95 303.99 C717.54 295.72 726.65 287.67 732.72 278.94 C738.80 270.21 742.59 260.41 746.39 251.61 C750.19 242.80 753.98 230.35 755.50 226.10" stroke="#303030" stroke-width="1.0" fill="none"/>
<circle cx="300.00" cy="681.60" r="4" fill="rgba(20,20,20,0.5)"/>
<circle cx="310.02" cy="674.77" r="4" fill="rgba(20,20,20,0.5)"/>
<circle cx="314.12" cy="670.67" r="4" fill="rgba(20,20,20,0.5)"/>
<circle cx="322.77" cy="662.47" r="4" fill="rgba(20,20,20,0.5)"/>
<circle cx="331.88" cy="654.27" r="4" fill="rgba(20,20,20,0.5)"/>
<circle cx="345.55" cy="641.97" r="4" fill="rgba(20,20,20,0.5)"/>
<circle cx="368.32" cy="622.84" r="4" fill="rgba(20,20,20,0.5)"/>
<circle cx="391.10" cy="601.89" r="4" fill="rgba(20,20,20,0.5)"/>
<circle cx="413.88" cy="580.93" r="4" fill="rgba(20,20,20,0.5)"/>
<circle cx="436.65" cy="559.07" r="4" fill="rgba(20,20,20,0.5)"/>
<circle cx="482.20" cy="519.44" r="4" fill="rgba(20,20,20,0.5)"/>
<circle cx="527.75" cy="477.08" r="4" fill="rgba(20,20,20,0.5)"/>
<circle cx="573.30" cy="433.81" r="4" fill="rgba(20,20,20,0.5)"/>
<circle cx="618.85" cy="390.99" r="4" fill="rgba(20,20,20,0.5)"/>
<circle cx="641.62" cy="372.32" r="4" fill="rgba(20,20,20,0.5)"/>
<circle cx="664.40" cy="351.36" r="4" fill="rgba(20,20,20,0.5)"/>
<circle cx="687.17" cy="328.59" r="4" fill="rgba(20,20,20,0.5)"/>
<circle cx="709.95" cy="303.99" r="4" fill="rgba(20,20,20,0.5)"/>
<circle cx="732.72" cy="278.94" r="4" fill="rgba(20,20,20,0.5)"/>
<circle cx="746.39" cy="251.61" r="4" fill="rgba(20,20,20,0.5)"/>
<circle cx="755.50" cy="226.10" r="4" fill="rgba(20,20,20,0.5)"/>
</svg>
<div class="t" style="left:282.50px;top:231.10px;font-size:8.5px;line-height:8.5px;color:#000;transform:scaleX(0.8450)">100</div>
<div class="t" style="left:288.00px;top:449.60px;font-size:8.5px;line-height:8.5px;color:#000;transform:scaleX(0.9000)">%</div>
<div class="t" style="left:291.20px;top:668.10px;font-size:8.5px;line-height:8.5px;color:#000;transform:scaleX(0.8600)">0</div>
<div class="t" style="left:304.30px;top:686.00px;font-size:8.5px;line-height:8.5px;color:#000;transform:scaleX(0.9300)">White</div>
<div class="t" style="left:527.30px;top:686.00px;font-size:8.5px;line-height:8.5px;color:#000;transform:scaleX(0.9400)">%</div>
<div class="t" style="left:737.00px;top:686.00px;font-size:8.5px;line-height:8.5px;color:#000;transform:scaleX(0.8360)">100</div>
</div>
</body></html>
